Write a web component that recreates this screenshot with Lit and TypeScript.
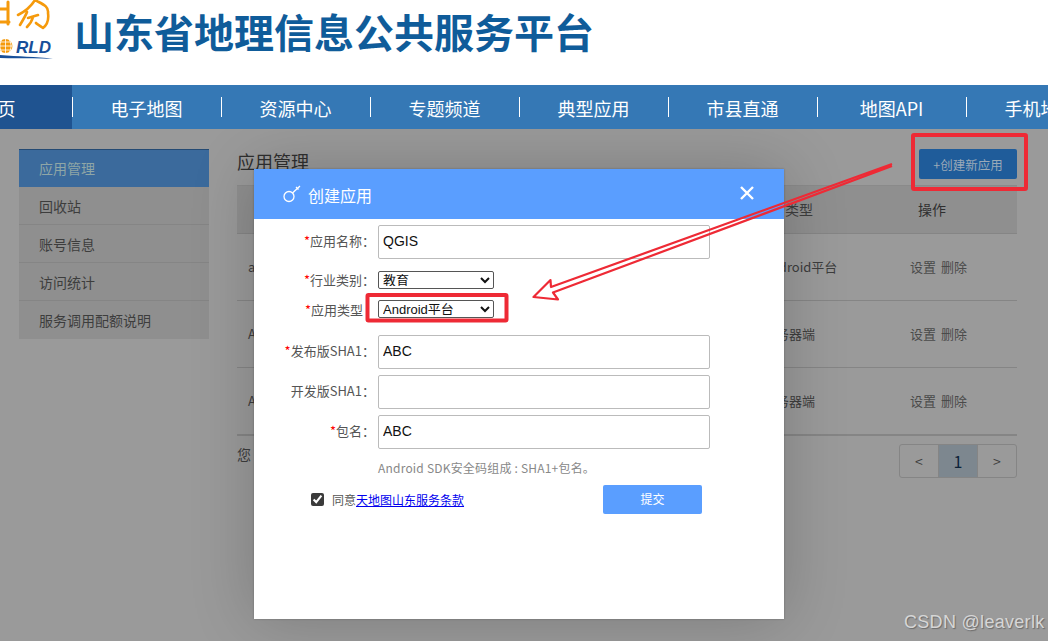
import { LitElement, html, css } from "lit";
import { customElement } from "lit/decorators.js";

@customElement("app-root")
export class AppRoot extends LitElement {
  static styles = css`
    :host {
      display: block;
      position: relative;
      width: 1048px;
      height: 641px;
      overflow: hidden;
      background: #9a9a9a;
      font-family: "Noto Sans CJK SC", "Liberation Sans", sans-serif;
    }
    * { box-sizing: border-box; }
    .top {
      height: 85px;
      background: #fff;
      display: flex;
      align-items: flex-start;
    }
    .logo { width: 74px; height: 62px; flex: none; display: block; }
    .site {
      font-size: 40px;
      line-height: 62px;
      font-weight: 700;
      color: #0f5c9a;
      white-space: nowrap;
    }
    .nav {
      height: 44px;
      background: #3578b5;
      display: flex;
      margin-left: -77px;
      width: 1125px;
      overflow: hidden;
    }
    .nav a {
      flex: none;
      width: 149px;
      height: 44px;
      line-height: 46px;
      color: #fff;
      font-size: 18px;
      text-align: center;
      position: relative;
      white-space: nowrap;
    }
    .nav a.on { background: #1f5390; }
    .nav a.sep::before {
      content: "";
      position: absolute;
      left: 0;
      top: 12px;
      height: 20px;
      width: 1px;
      background: #fff;
    }
    .body {
      height: 512px;
      display: flex;
      align-items: flex-start;
      padding: 20px 31px 0 19px;
      background: #9a9a9a;
    }
    .side { width: 190px; margin-right: 28px; flex: none; background: #8f8f8f; }
    .side div {
      height: 38px;
      line-height: 39px;
      padding-left: 20px;
      font-size: 14px;
      color: #3d3d3d;
      border-bottom: 1px solid #858585;
    }
    .side div:last-child { border-bottom: 0; }
    .side div.on {
      background: #3b6a9c;
      color: #8fa6a6;
      border-top: 1px solid #244a73;
      border-bottom: 0;
      line-height: 37px;
    }
    .main { flex: 1; min-width: 0; }
    .head {
      height: 36px;
      display: flex;
      justify-content: space-between;
      align-items: flex-start;
    }
    .head h2 {
      margin: 0;
      font-size: 18px;
      font-weight: 400;
      color: #2f2f2f;
      line-height: 25px;
    }
    .new {
      width: 98px;
      height: 30px;
      line-height: 31px;
      background: #1f5c9a;
      border-radius: 2px;
      color: #9aa9b8;
      font-size: 12.5px;
      text-align: center;
    }
    .row {
      display: grid;
      grid-template-columns: 11px 515px 147px 1fr;
      font-size: 13px;
      color: #3d3d3d;
      align-items: center;
      border-bottom: 1px solid #858585;
      height: 67px;
      padding-bottom: 2px;
    }
    .row.th {
      height: 49px;
      background: #8f8f8f;
      border-top: 1px solid #8a8a8a;
      font-size: 14px;
    }
    .th .name { padding-left: 40px; }
    .th .type { margin-left: -6px; }
    .row.last { border-bottom: 2px solid #858585; height: 68px; }
    .ops { color: #4a4a4a; white-space: nowrap; word-spacing: 2px; }
    .th .ops { padding-left: 8px; color: #2f2f2f; }
    .foot {
      display: flex;
      justify-content: space-between;
      align-items: flex-start;
      margin-top: 8px;
      font-size: 14px;
      color: #3d3d3d;
    }
    .total { line-height: 20px; }
    .pager {
      display: flex;
      width: 118px;
      height: 34px;
      border: 1px solid #858585;
      border-radius: 3px;
      overflow: hidden;
    }
    .pager span {
      flex: 1;
      text-align: center;
      line-height: 33px;
      font-size: 14px;
      color: #3d3d3d;
      border-left: 1px solid #858585;
    }
    .pager span:first-child { border-left: 0; }
    .pager span.cur { background: #7d878f; font-size: 16px; color: #0c2238; }

    .shade {
      position: absolute;
      left: 0; top: 129px; right: 0; bottom: 0;
      overflow: hidden;
      pointer-events: none;
    }
    .shade::before {
      content: "";
      position: absolute;
      left: 254px;
      top: 40px;
      width: 530px;
      height: 450px;
      box-shadow: 0 0 60px rgba(0,0,0,.2);
    }
    .modal {
      position: absolute;
      left: 254px;
      top: 169px;
      width: 530px;
      height: 450px;
      background: #fff;
      box-shadow: 0 0 2px rgba(0,0,0,.25);
    }
    .mh {
      height: 50px;
      background: #5a9eff;
      color: #fff;
      display: flex;
      align-items: center;
      padding: 2px 0 0 29px;
      font-size: 16px;
      position: relative;
    }
    .mh svg.key { width: 18px; height: 20px; margin-right: 7px; flex: none; }
    .mh svg.x { position: absolute; left: 486px; top: 17px; width: 14px; height: 14px; }
    .fr { display: flex; align-items: center; }
    .fr label {
      width: 124px;
      height: 18px;
      line-height: 18px;
      flex: none;
      text-align: right;
      white-space: nowrap;
      font-size: 13px;
      color: #555;
      padding-right: 3px;
    }
    .fr.in label { margin-bottom: 2px; }
    .fr label.gap { padding-right: 15px; align-self: flex-start; margin-top: 2px; }
    .fr b { font-weight: 400; color: #f00; }
    .fr input {
      width: 332px;
      height: 34px;
      border: 1px solid #bbb;
      border-radius: 2px;
      padding: 0 4px 2px;
      font: 14px "Liberation Sans", sans-serif;
      color: #111;
      background: #fff;
      outline: none;
    }
    .fr select {
      width: 116px;
      height: 18px;
      font: 13px "Liberation Sans", "Noto Sans CJK SC", sans-serif;
      color: #111;
      background: #fff;
      border: 1px solid #555;
      border-radius: 2px;
      padding: 0 0 2px;
    }
    .r1 { margin-top: 6px; }
    .r2 { margin-top: 12px; }
    .r3 { margin-top: 10px; }
    .r4 { margin-top: 16px; }
    .r5 { margin-top: 6px; }
    .hint {
      margin: 11px 0 0 124px;
      font-size: 12px;
      line-height: 16px;
      letter-spacing: .2px;
      color: #888;
      white-space: nowrap;
    }
    .agree {
      display: flex;
      align-items: center;
      justify-content: space-between;
      margin: 9px 82px 0 57px;
      height: 29px;
    }
    .agree .l { display: flex; align-items: center; font-size: 12px; color: #555; }
    .agree input { width: 13px; height: 13px; margin: 0 8px 0 0; accent-color: #3b3b3b; }
    .agree a { color: #00e; text-decoration: underline; }
    .submit {
      width: 99px;
      height: 29px;
      line-height: 28px;
      border-radius: 2px;
      background: #5a9eff;
      color: #fff;
      text-align: center;
      font-size: 12px;
    }
    .marks { position: absolute; left: 0; top: 0; width: 1048px; height: 641px; pointer-events: none; }
    .wm {
      position: absolute;
      left: 904px;
      top: 611px;
      font: 18px "Liberation Sans", sans-serif;
      letter-spacing: .3px;
      line-height: 22px;
      color: #d6d6d6;
      text-shadow: 1px 1px 1px rgba(60,60,60,.5);
      white-space: nowrap;
    }
  `;

  render() {
    const nav = ["首页", "电子地图", "资源中心", "专题频道", "典型应用", "市县直通", "地图API", "手机地图"];
    const side = ["应用管理", "回收站", "账号信息", "访问统计", "服务调用配额说明"];
    return html`
      <div class="top">
        <svg class="logo" viewBox="0 0 74 62">
          <g fill="none" stroke="#f59a0c" stroke-linecap="round" stroke-linejoin="round">
            <path d="M0 9 H8 M0 22 H9 M8 2 V24" stroke-width="3"/>
            <path d="M18 15 C24 12 30 8 35 0 M20 25 C23 20 26 15 27 12 M35 0 C42 4 49 6 48 13 C49 20 47 25 43 28 C40 26 37 24 36 23 M28 18 L38 15 M33 17 C32 21 30 24 27 27" stroke-width="2.6"/>
          </g>
          <circle cx="5.5" cy="46" r="7" fill="#f59a0c"/>
          <path d="M-1.5 46 H12.5 M5.5 39 V53 M-1 42 H12 M-1 50 H12 M1.5 40 C-.5 44 -.5 48 1.5 52 M9.5 40 C11.5 44 11.5 48 9.5 52" stroke="#fff" stroke-width=".8" fill="none"/>
          <text x="16" y="52.5" font-family="Liberation Sans" font-size="17" font-weight="700" font-style="italic" fill="#174f9a">RLD</text>
          <path d="M0 55 C18 57 36 56 53 59 C36 57.5 18 59 0 58 Z" fill="#174f9a"/>
        </svg>
        <div class="site">山东省地理信息公共服务平台</div>
      </div>
      <div class="nav">
        ${nav.map((n, i) => html`<a class="${i === 0 ? "on" : "sep"}">${n}</a>`)}
      </div>
      <div class="body">
        <div class="side">
          ${side.map((s, i) => html`<div class="${i === 0 ? "on" : ""}">${s}</div>`)}
        </div>
        <div class="main">
          <div class="head">
            <h2>应用管理</h2>
            <div class="new">+创建新应用</div>
          </div>
          <div class="row th"><span></span><span class="name">应用名称</span><span class="type">应用类型</span><span class="ops">操作</span></div>
          <div class="row"><span></span><span>a</span><span>Android平台</span><span class="ops">设置 删除</span></div>
          <div class="row"><span></span><span>A</span><span>服务器端</span><span class="ops">设置 删除</span></div>
          <div class="row last"><span></span><span>A</span><span>服务器端</span><span class="ops">设置 删除</span></div>
          <div class="foot">
            <span class="total">您</span>
            <div class="pager"><span>&lt;</span><span class="cur">1</span><span>&gt;</span></div>
          </div>
        </div>
      </div>
      <div class="shade"></div>
      <div class="modal">
        <div class="mh">
          <svg class="key" viewBox="0 0 18 20" fill="none" stroke="#fff" stroke-width="1.3">
            <circle cx="6" cy="11.5" r="5"/>
            <path d="M9.5 8 L17 1 M13 2 L15.5 4.5"/>
          </svg>
          创建应用
          <svg class="x" viewBox="0 0 14 14" stroke="#fff" stroke-width="2.4"><path d="M1 1 L13 13 M13 1 L1 13"/></svg>
        </div>
        <div class="form">
          <div class="fr in r1"><label><b>*</b>应用名称：</label><input value="QGIS"/></div>
          <div class="fr r2"><label><b>*</b>行业类别：</label><select><option>教育</option></select></div>
          <div class="fr r3"><label class="gap"><b>*</b>应用类型</label><select><option>Android平台</option></select></div>
          <div class="fr in r4"><label><b>*</b>发布版SHA1：</label><input value="ABC"/></div>
          <div class="fr in r5"><label>开发版SHA1：</label><input value=""/></div>
          <div class="fr in r5"><label><b>*</b>包名：</label><input value="ABC"/></div>
          <div class="hint">Android SDK安全码组成 : SHA1+包名。</div>
          <div class="agree">
            <div class="l"><input type="checkbox" checked/>同意<a>天地图山东服务条款</a></div>
            <div class="submit">提交</div>
          </div>
        </div>
      </div>
      <svg class="marks" viewBox="0 0 1048 641" fill="none" stroke="#ee2a35" stroke-linejoin="round">
        <rect x="913" y="135" width="113" height="54" stroke-width="4" rx="1"/>
        <rect x="367.5" y="295" width="139" height="25.5" stroke-width="4" rx="1"/>
        <path d="M892 164 L551 287 L550.5 280 L533.5 297 L558 299.5 L553 292.5 L892 166" stroke-width="2.2"/>
      </svg>
      <div class="wm">CSDN @leaverlk</div>
    `;
  }
}
